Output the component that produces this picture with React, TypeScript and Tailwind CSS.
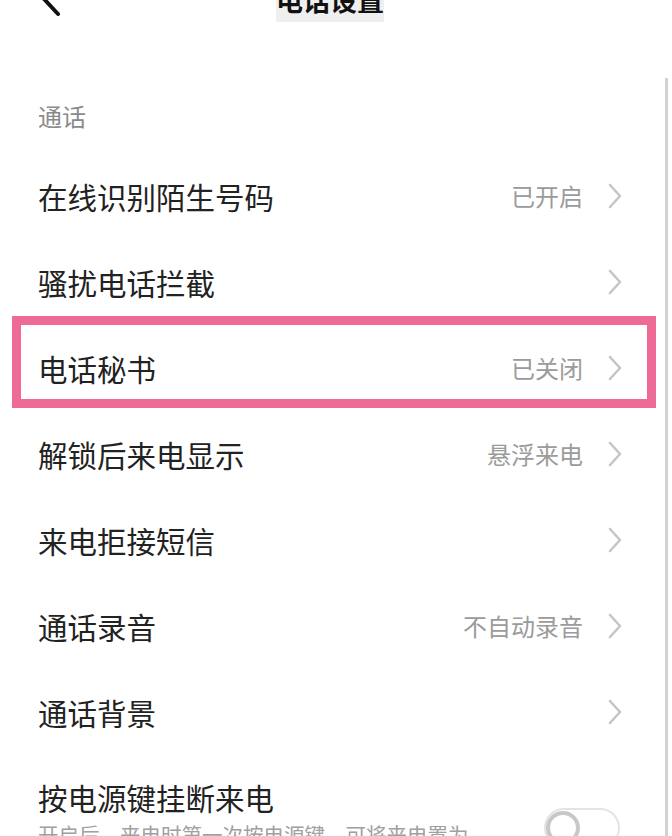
import React from 'react';

type Row = {
  title: string;
  value?: string;
  marked?: boolean;
};

const rows: Row[] = [
  { title: '在线识别陌生号码', value: '已开启' },
  { title: '骚扰电话拦截' },
  { title: '电话秘书', value: '已关闭', marked: true },
  { title: '解锁后来电显示', value: '悬浮来电' },
  { title: '来电拒接短信' },
  { title: '通话录音', value: '不自动录音' },
  { title: '通话背景' },
];

function Chevron() {
  return (
    <svg width="14" height="26" viewBox="0 0 14 26" fill="none" className="shrink-0">
      <path d="M2 2 L12 13 L2 24" stroke="#c6c6c6" strokeWidth="2.6" strokeLinecap="round" strokeLinejoin="round" />
    </svg>
  );
}

function SettingRow({ row }: { row: Row }) {
  return (
    <div className="relative flex h-[86px] items-center pl-[38px] pr-[38px]">
      <span className="flex-1 text-[29.5px] text-[#222]">{row.title}</span>
      {row.value && <span className="mr-[25px] text-[24px] text-[#9b9b9b]">{row.value}</span>}
      <Chevron />
      {row.marked && (
        <div className="absolute left-[12px] right-[4px] top-[-9px] bottom-[3px] border-[9px] border-[#ee6b96]" />
      )}
    </div>
  );
}

export default function App() {
  return (
    <div
      className="relative h-[836px] w-[672px] overflow-hidden bg-white"
      style={{ fontFamily: '"Noto Sans CJK SC", "Noto Sans", sans-serif' }}
    >
      <div className="w-[660px]">
        {/* header, scrolled partly out of view */}
        <div className="-mt-[22px] flex h-[44px] items-center">
          <div className="flex w-[120px] items-center pl-[34px]">
            <svg width="34" height="44" viewBox="0 0 34 44" fill="none">
              <path d="M24 6 L10 21 L24 36" stroke="#111" strokeWidth="4" strokeLinecap="round" strokeLinejoin="round" />
            </svg>
          </div>
          <div className="flex flex-1 justify-center">
            <span className="bg-[#efefef] text-[27px] font-bold leading-[44px] text-[#111]">电话设置</span>
          </div>
          <div className="w-[120px]" />
        </div>

        <div className="flex h-[131px] items-end pb-[22px] pl-[38px]">
          <span className="text-[24px] leading-[30px] text-[#8a8a8a]">通话</span>
        </div>

        {rows.map((row) => (
          <SettingRow key={row.title} row={row} />
        ))}

        <div className="flex items-start pl-[38px] pr-[40px] pt-[25px]">
          <div className="flex-1">
            <div className="text-[29.5px] leading-[34px] text-[#222]">按电源键挂断来电</div>
            <div className="mt-[6px] max-w-[440px] text-[20.5px] leading-[28px] text-[#a0a0a0]">
              开启后，来电时第一次按电源键，可将来电置为静音
            </div>
          </div>
          <div className="mt-[28px] flex h-[40px] w-[76px] items-center rounded-full border-2 border-[#e4e4e4] bg-white">
            <div className="h-[34px] w-[34px] rounded-full border-[4px] border-[#c8c8c8] bg-white" />
          </div>
        </div>
      </div>

      <div className="absolute bottom-0 right-[4px] top-[78px] w-[3px] bg-[#d2d2d2]" />
    </div>
  );
}
